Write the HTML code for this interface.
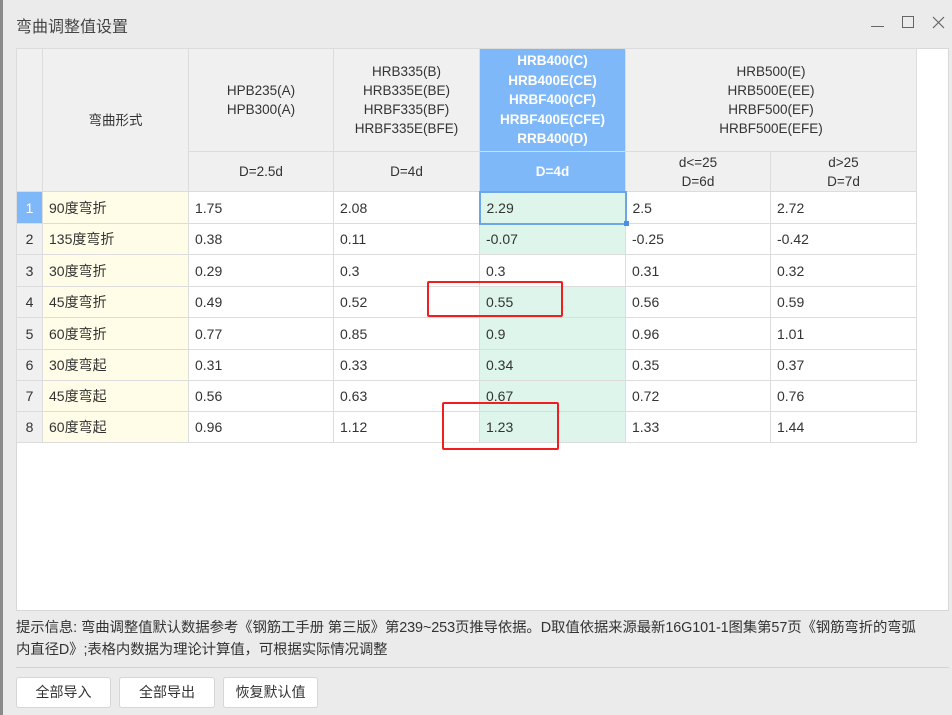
<!DOCTYPE html>
<html><head><meta charset="utf-8"><style>
*{margin:0;padding:0;box-sizing:border-box}
body{width:952px;height:715px;background:#ebebeb;font-family:"Liberation Sans","Noto Sans CJK SC",sans-serif;color:#333;position:relative;overflow:hidden}
.a{position:absolute}
#box{left:16px;top:48px;width:933px;height:563px;background:#fff;border:1px solid #d8d8d8}
table{position:absolute;left:16px;top:48px;border-collapse:collapse;table-layout:fixed;font-size:14px}
td{border:1px solid #dcdcdc;padding:0 0 0 6px;white-space:nowrap;overflow:hidden}
.h{background:#f0f0f0;text-align:center;padding:0;font-size:13.5px;line-height:19px;color:#333}
.b{background:#7fb8f8;color:#fff;font-weight:bold}
.n{background:#f0f0f0;text-align:center;padding:0;color:#333}
.y{background:#fffde7}
.g{background:#ddf5ea}
.r{position:absolute;border:2px solid #f01e1e;border-radius:2px}
.btn{position:absolute;top:677px;height:31px;background:#fff;border:1px solid #d6d6d6;border-radius:3px;font-size:14px;text-align:center;line-height:29px}
</style></head><body>
<div class="a" style="left:0;top:0;width:3px;height:715px;background:#8a8a8a"></div>
<div class="a" style="left:16px;top:13px;font-size:16px;color:#444">弯曲调整值设置</div>
<div class="a" style="left:871px;top:26px;width:13px;height:1px;background:#666"></div>
<div class="a" style="left:902px;top:16px;width:12px;height:12px;border:1px solid #666"></div>
<svg class="a" style="left:932px;top:16px" width="13" height="13"><path d="M1 1L12 12M12 1L1 12" stroke="#666" stroke-width="1.2"/></svg>
<div id="box" class="a"></div>
<table>
<colgroup><col style="width:26px"><col style="width:146px"><col style="width:145px"><col style="width:146px"><col style="width:146px"><col style="width:145px"><col style="width:146px"></colgroup>
<tr style="height:103px"><td class="h" rowspan="2"></td><td class="h" rowspan="2">弯曲形式</td><td class="h">HPB235(A)<br>HPB300(A)</td><td class="h">HRB335(B)<br>HRB335E(BE)<br>HRBF335(BF)<br>HRBF335E(BFE)</td><td class="h b" style="line-height:19.5px">HRB400(C)<br>HRB400E(CE)<br>HRBF400(CF)<br>HRBF400E(CFE)<br>RRB400(D)</td><td class="h" colspan="2">HRB500(E)<br>HRB500E(EE)<br>HRBF500(EF)<br>HRBF500E(EFE)</td></tr>
<tr style="height:40px"><td class="h">D=2.5d</td><td class="h">D=4d</td><td class="h b">D=4d</td><td class="h">d&lt;=25<br>D=6d</td><td class="h">d&gt;25<br>D=7d</td></tr>
<tr style="height:32px"><td class="n" style="background:#7fb8f8;color:#fff">1</td><td class="y">90度弯折</td><td>1.75</td><td>2.08</td><td class="g" style="border:2px solid #6aa6e8">2.29</td><td>2.5</td><td>2.72</td></tr>
<tr style="height:31px"><td class="n">2</td><td class="y">135度弯折</td><td>0.38</td><td>0.11</td><td class="g">-0.07</td><td>-0.25</td><td>-0.42</td></tr>
<tr style="height:32px"><td class="n">3</td><td class="y">30度弯折</td><td>0.29</td><td>0.3</td><td>0.3</td><td>0.31</td><td>0.32</td></tr>
<tr style="height:31px"><td class="n">4</td><td class="y">45度弯折</td><td>0.49</td><td>0.52</td><td class="g">0.55</td><td>0.56</td><td>0.59</td></tr>
<tr style="height:32px"><td class="n">5</td><td class="y">60度弯折</td><td>0.77</td><td>0.85</td><td class="g">0.9</td><td>0.96</td><td>1.01</td></tr>
<tr style="height:31px"><td class="n">6</td><td class="y">30度弯起</td><td>0.31</td><td>0.33</td><td class="g">0.34</td><td>0.35</td><td>0.37</td></tr>
<tr style="height:31px"><td class="n">7</td><td class="y">45度弯起</td><td>0.56</td><td>0.63</td><td class="g">0.67</td><td>0.72</td><td>0.76</td></tr>
<tr style="height:31px"><td class="n">8</td><td class="y">60度弯起</td><td>0.96</td><td>1.12</td><td class="g">1.23</td><td>1.33</td><td>1.44</td></tr>
</table>
<div class="a" style="left:624px;top:221px;width:5px;height:5px;background:#4a90e2"></div>
<div class="r" style="left:427px;top:281px;width:136px;height:36px"></div>
<div class="r" style="left:442px;top:402px;width:117px;height:48px"></div>
<div class="a" style="left:16px;top:617px;font-size:14.4px;line-height:22px;color:#333;white-space:nowrap;letter-spacing:-0.1px">提示信息: 弯曲调整值默认数据参考《钢筋工手册 第三版》第239~253页推导依据。D取值依据来源最新16G101-1图集第57页《钢筋弯折的弯弧<br>内直径D》;表格内数据为理论计算值，可根据实际情况调整</div>
<div class="a" style="left:16px;top:667px;width:933px;height:1px;background:#d4d4d4"></div>
<div class="btn" style="left:16px;width:95px">全部导入</div>
<div class="btn" style="left:119px;width:96px">全部导出</div>
<div class="btn" style="left:223px;width:95px">恢复默认值</div>
</body></html>
